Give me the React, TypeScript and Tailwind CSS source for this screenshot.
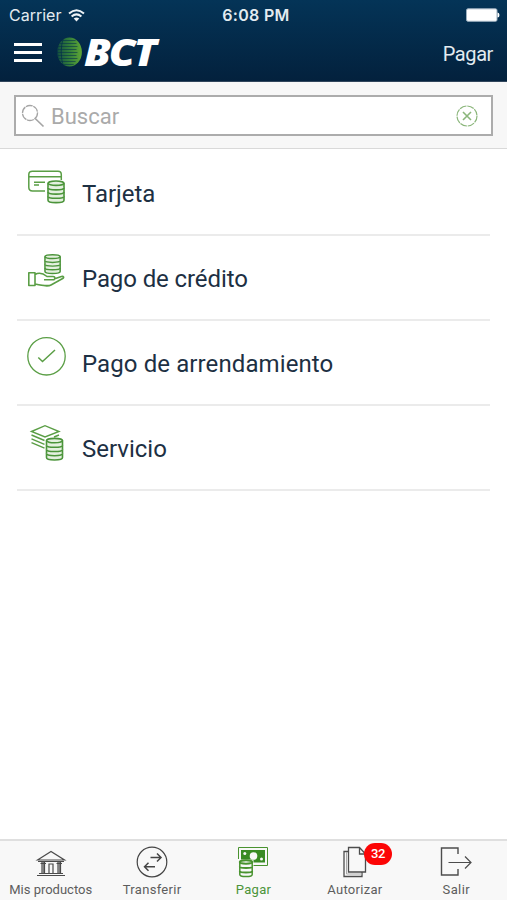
import React from "react";

const GREEN = "#5a9e45";

function Coins() {
  return (
    <g fill="#e4f0df" stroke="#4b943a" strokeWidth="1.600">
      <path d="M.8 3v17c0 1.500 3.600 2.400 8 2.400s8-.9 8-2.400V3" />
      <path d="M.8 16c0 1.300 3.600 2.100 8 2.100s8-.8 8-2.100M.8 11.800c0 1.300 3.600 2.100 8 2.100s8-.8 8-2.100M.8 7.600c0 1.300 3.600 2.100 8 2.100s8-.8 8-2.100" />
      <ellipse cx="8.800" cy="3" rx="8" ry="2.200" />
    </g>
  );
}

function CardIcon() {
  return (
    <svg className="block h-10 w-11" viewBox="0 0 44 40" fill="none" stroke={GREEN} strokeWidth="1.500">
      <path d="M21 25H8.500Q4.800 25 4.800 21.300V8.500Q4.800 5.300 8.500 5.300h25.500q3.300 0 3.300 3.200V14M5 10.800h32.300M10 16.300h11M10 19h5" />
      <g transform="translate(23.200 14.200)"><Coins /></g>
    </svg>
  );
}

function HandIcon() {
  return (
    <svg className="block h-10 w-11" viewBox="0 0 44 40" fill="none" stroke={GREEN} strokeWidth="1.600" strokeLinejoin="round">
      <g transform="translate(20.200 3) scale(.95 .87)"><Coins /></g>
      <path d="M4.800 21.800h6.200v12.700H4.800zM11 23.500c5-3 9-.5 12 2h6c2.500 0 2.500 3.300 0 3.300h-9M30 28l7.500-2.500c2-.6 3 1 1.200 2L27 34c-3 1.600-7 .8-16-1" />
    </svg>
  );
}

function CheckIcon() {
  return (
    <svg className="block h-10 w-11" viewBox="0 0 44 40" fill="none" stroke={GREEN} strokeWidth="1.300">
      <circle cx="22.500" cy="20.300" r="18.700" />
      <path d="m14.300 21.500 4.200 4L31 14" strokeWidth="1.500" />
    </svg>
  );
}

function LayersIcon() {
  return (
    <svg className="block h-10 w-11" viewBox="0 0 44 40" fill="none" stroke={GREEN} strokeWidth="1.400">
      <path d="M7.500 10.500 21 4.700l14 5.800-14 5.500zM7.500 14l13 5.500M7.500 17.800l13 5.500M7.500 21.600l13 5.500M35 14l-5 2" />
      <g transform="translate(21.700 16.600)"><Coins /></g>
    </svg>
  );
}

const rows = [
  { text: "Tarjeta", icon: <CardIcon />, track: "tracking-[-0.05px]" },
  { text: "Pago de crédito", icon: <HandIcon />, track: "tracking-[-0.1px]" },
  { text: "Pago de arrendamiento", icon: <CheckIcon />, track: "tracking-[0.1px]" },
  { text: "Servicio", icon: <LayersIcon />, track: "tracking-[0px]" },
];

function BankIcon() {
  return (
    <svg className="block h-9 w-10" viewBox="0 0 40 36" fill="none" stroke="#4b4b4b" strokeWidth="1.200">
      <path d="m6.500 15 13.500-8.500 13.500 8.500zM7 16.500h26M6 30.500h28M8 28.500h24M11 17v11M13.500 17v11M18 28V19h4v9M27 17v11M29.500 17v11" />
      <path d="M12.200 17v11M28.200 17v11" strokeWidth="1.500" stroke="#777" />
      <path d="M9.500 18.500h5.500M25.500 18.500h5.500" />
    </svg>
  );
}

function TransferIcon() {
  return (
    <svg className="block h-9 w-10" viewBox="0 0 40 36" fill="none" stroke="#444" strokeWidth="1.200">
      <circle cx="20" cy="17" r="14.800" />
      <path d="M18.500 12.500H29M25 8.500l4 4-4 4M23 21.800H12.500M16.500 17.800l-4 4 4 4" strokeWidth="1.500" />
    </svg>
  );
}

function CashIcon() {
  return (
    <svg className="block h-9 w-10" viewBox="0 0 40 36" fill="none" stroke="#49932f">
      <path d="M5.500 14V2.500h29V20.500H20" strokeWidth="1" />
      <path d="M8 5h24v12.500H8z" fill="#398b24" stroke="none" />
      <g fill="#f8f8f8" stroke="none"><circle cx="20.500" cy="11" r="3.800" /><circle cx="11.800" cy="8.500" r="1.500" /><circle cx="28.500" cy="14" r="1.500" /></g>
      <path d="M5.500 14.500h15V31h-15z" fill="#f8f8f8" stroke="none" />
      <g fill="#f8f8f8" strokeWidth="1.500">
        <path d="M6.800 17v12.500c0 2.800 12.400 2.800 12.400 0V17" />
        <path d="M6.800 26c0 2 12.400 2 12.400 0M6.800 21.500c0 2 12.400 2 12.400 0" strokeWidth="2" />
        <ellipse cx="13" cy="17" rx="6.200" ry="1.700" strokeWidth="2" />
      </g>
    </svg>
  );
}

function PagesIcon() {
  return (
    <svg className="block h-9 w-10" viewBox="0 0 40 36" fill="none" stroke="#4c4c4c" strokeWidth="1.300">
      <path d="M13.500 2.500h11l6 6.500v18h-17zM24.500 2.500V9h6M13.500 6.500h-4.500v25h18V27" />
      <path d="M11.500 7v22H27" stroke="#aaa" strokeWidth="1" />
    </svg>
  );
}

function ExitIcon() {
  return (
    <svg className="block h-9 w-10" viewBox="0 0 40 36" fill="none" stroke="#4c4c4c" strokeWidth="1.200">
      <path d="M22 9V3H5.500v27H22v-6" strokeWidth="1.400" />
      <path d="M12.500 17.500H35M29 11.500l6 6-6 6" />
    </svg>
  );
}

const tabs = [
  { text: "Mis productos", icon: <BankIcon />, color: "text-[#5d5d5d]", track: "tracking-[0px]" },
  { text: "Transferir", icon: <TransferIcon />, color: "text-[#5d5d5d]", track: "tracking-[0.3px]" },
  { text: "Pagar", icon: <CashIcon />, color: "text-[#4b943a]", track: "tracking-[0.3px]" },
  { text: "Autorizar", icon: <PagesIcon />, color: "text-[#5d5d5d]", track: "tracking-[0.3px]", badge: "32" },
  { text: "Salir", icon: <ExitIcon />, color: "text-[#5d5d5d]", track: "tracking-[0.4px]" },
];

function Globe() {
  return (
    <svg className="block h-[30px] w-[26px]" viewBox="0 0 28 30" preserveAspectRatio="none">
      <defs>
        <linearGradient id="globe" x1="0" x2="1">
          <stop offset="0" stopColor="#14503f" />
          <stop offset=".5" stopColor="#34803a" />
          <stop offset="1" stopColor="#64aa35" />
        </linearGradient>
        <clipPath id="ball"><ellipse cx="13.500" cy="15" rx="13.300" ry="14.500" /></clipPath>
      </defs>
      <g clipPath="url(#ball)">
        <path d="M0 0h28v30H0z" fill="url(#globe)" />
        <path d="M0 3.500h20M0 6.500h21M0 9.500h22M0 12.500h21M0 15.500h22M0 18.500h21M0 21.500h22M0 24.500h20M0 27.500h18" stroke="#05304b" strokeWidth=".6" />
        <path d="M3 0q-5 15 0 30M7 0q-5 15 0 30" fill="none" stroke="#05304b" strokeWidth=".8" />
      </g>
    </svg>
  );
}

export default function App() {
  return (
    <div className="flex h-[900px] w-[507px] flex-col overflow-hidden bg-white font-['Roboto',sans-serif] text-[#1d3043]">
      <header className="h-[82px] shrink-0 border-b border-[#31465c] bg-linear-to-b from-[#043457] to-[#03213d] text-[#e3ebf0]">
        <div className="grid h-[30px] grid-cols-3 items-center pl-[9px] pr-[7px]">
          <div className="flex items-center gap-[7px]">
            <span className="font-['Inter',sans-serif] text-[16px] tracking-[0px]">Carrier</span>
            <svg className="h-[13px] w-[17px]" viewBox="0 0 17 13" fill="none" stroke="#eef3f6" strokeWidth="2">
              <path d="M1 4.600q7.500-6.600 15 0M3.600 7.500q4.900-4.200 9.800 0" />
              <path d="m8.500 12.500-2.800-3q2.800-2.200 5.600 0z" fill="#eef3f6" stroke="none" />
            </svg>
          </div>
          <div className="pl-[3px] text-center font-['Inter',sans-serif] text-[16px] font-semibold tracking-[0.3px]">6:08 PM</div>
          <svg className="h-[14px] w-[34px] justify-self-end" viewBox="0 0 34 14">
            <rect x=".5" y=".8" width="30.500" height="12.500" rx="1.500" fill="#fff" stroke="#9db0bf" />
            <path d="M31.500 4.500q2 0 2 2.500t-2 2.500z" fill="#fff" />
          </svg>
        </div>
        <div className="flex h-11 items-center pl-3.5 pr-3.5">
          <div className="flex w-7 flex-col gap-[5px]">
            <i className="block h-[3px] bg-white" />
            <i className="block h-[3px] bg-white" />
            <i className="block h-[3px] bg-white" />
          </div>
          <div className="ml-[15px]"><Globe /></div>
          <div className="ml-px origin-left scale-x-[1.15] font-['Open_Sans',sans-serif] text-[37px] leading-[44px] font-extrabold italic tracking-[-1.9px] text-white">BCT</div>
          <div className="ml-auto pt-[3px] text-[20px] tracking-[-0.4px]">Pagar</div>
        </div>
      </header>

      <div className="h-[67px] shrink-0 border-b border-[#d9d9d9] bg-[#f7f7f7] px-3.5 pt-[13px]">
        <div className="flex h-[41px] items-center border-2 border-[#acacac] bg-white pl-[5px] pr-[13px]">
          <svg className="h-6 w-6" viewBox="0 0 24 24" fill="none" stroke="#a5a5a5" strokeWidth="1.300">
            <circle cx="9" cy="9" r="7.500" strokeDasharray="7 .7" />
            <path d="m14.200 14.500 8.300 8" strokeWidth="1.700" />
          </svg>
          <span className="ml-[6px] pt-px text-[22px] tracking-[0px] text-[#aaa]">Buscar</span>
          <svg className="ml-auto h-[22px] w-[22px]" viewBox="0 0 22 22" fill="none" stroke="#8bb67b" strokeWidth="1.200">
            <circle cx="11" cy="11" r="10" strokeDasharray="7 .85" />
            <path d="m7 7 8 8m0-8-8 8" strokeWidth="1.600" />
          </svg>
        </div>
      </div>

      <main className="min-h-0 flex-1 px-[17px] pt-[2px]">
        {rows.map(({ text, icon, track }) => (
          <div key={text} className="flex h-[85px] border-b-2 border-[#ebebeb] pl-[7px]">
            <div className="pt-[15px]">{icon}</div>
            <div className={`ml-3.5 pt-[27px] text-[24px] leading-[32px] whitespace-nowrap ${track}`}>{text}</div>
          </div>
        ))}
      </main>

      <nav className="grid h-[61px] shrink-0 grid-cols-5 border-t-2 border-[#dfdfdf] bg-[#f8f8f8]">
        {tabs.map(({ text, icon, color, track, badge }) => (
          <div key={text} className={`flex flex-col items-center pt-1 ${color}`}>
            <div className="relative">
              {icon}
              {badge && (
                <span className="absolute -top-[2px] left-[29px] flex h-[22px] w-7 items-center justify-center rounded-full bg-[#fc0505] text-[13px] font-medium tracking-[-0.5px] text-white">{badge}</span>
              )}
            </div>
            <div className={`mt-[1px] text-[13px] leading-4 whitespace-nowrap ${track}`}>{text}</div>
          </div>
        ))}
      </nav>
    </div>
  );
}
